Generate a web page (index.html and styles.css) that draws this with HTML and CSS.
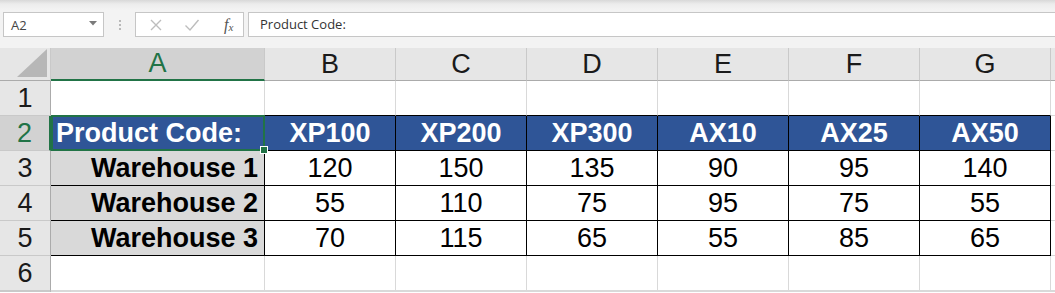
FILE: index.html
```html
<!DOCTYPE html>
<html lang="en">
<head>
<meta charset="utf-8">
<title>Stock by warehouse</title>
<link rel="stylesheet" href="styles.css">
</head>
<body>
<div class="app">
  <div class="formula-bar">
    <div class="namebox">
      <span class="namebox-ref">A2</span>
      <svg class="namebox-caret" width="8" height="5" viewBox="0 0 8 5"><path d="M0 0H8L4 4.5Z" fill="#7a7a7a"/></svg>
    </div>
    <div class="grip"><i></i><i></i><i></i></div>
    <div class="fx-tools">
      <svg class="tool" width="14" height="14" viewBox="0 0 14 14"><path d="M2 2L12 12M12 2L2 12" stroke="#bdbdbd" stroke-width="1.4" fill="none"/></svg>
      <svg class="tool" width="16" height="14" viewBox="0 0 16 14"><path d="M1.5 7.5L6 12L14.5 2" stroke="#bdbdbd" stroke-width="1.4" fill="none"/></svg>
      <span class="fx"><i>f</i><sub>x</sub></span>
    </div>
    <div class="formula-input">Product Code:</div>
  </div>

  <div class="sheet">
    <!-- column headers -->
    <div class="corner"><svg width="30" height="28" viewBox="0 0 30 28"><path d="M30 0V28H0Z" fill="#b7b7b7"/></svg></div>
    <div class="colhead active">A</div>
    <div class="colhead">B</div>
    <div class="colhead">C</div>
    <div class="colhead">D</div>
    <div class="colhead">E</div>
    <div class="colhead">F</div>
    <div class="colhead">G</div>
    <div class="colhead rest"></div>

    <!-- row 1 -->
    <div class="rowhead">1</div>
    <div class="cell"></div>
    <div class="cell edge-b"></div>
    <div class="cell edge-b"></div>
    <div class="cell edge-b"></div>
    <div class="cell edge-b"></div>
    <div class="cell edge-b"></div>
    <div class="cell edge-b"></div>
    <div class="cell rest"></div>

    <!-- row 2: product codes -->
    <div class="rowhead active">2</div>
    <div class="cell boxed head label selected">Product Code:<span class="sel"><span class="handle"></span></span></div>
    <div class="cell boxed head">XP100</div>
    <div class="cell boxed head">XP200</div>
    <div class="cell boxed head">XP300</div>
    <div class="cell boxed head">AX10</div>
    <div class="cell boxed head">AX25</div>
    <div class="cell boxed head">AX50</div>
    <div class="cell rest"></div>

    <!-- row 3 -->
    <div class="rowhead">3</div>
    <div class="cell boxed name">Warehouse 1</div>
    <div class="cell boxed num">120</div>
    <div class="cell boxed num">150</div>
    <div class="cell boxed num">135</div>
    <div class="cell boxed num">90</div>
    <div class="cell boxed num">95</div>
    <div class="cell boxed num">140</div>
    <div class="cell rest"></div>

    <!-- row 4 -->
    <div class="rowhead">4</div>
    <div class="cell boxed name">Warehouse 2</div>
    <div class="cell boxed num">55</div>
    <div class="cell boxed num">110</div>
    <div class="cell boxed num">75</div>
    <div class="cell boxed num">95</div>
    <div class="cell boxed num">75</div>
    <div class="cell boxed num">55</div>
    <div class="cell rest"></div>

    <!-- row 5 -->
    <div class="rowhead">5</div>
    <div class="cell boxed name">Warehouse 3</div>
    <div class="cell boxed num">70</div>
    <div class="cell boxed num">115</div>
    <div class="cell boxed num">65</div>
    <div class="cell boxed num">55</div>
    <div class="cell boxed num">85</div>
    <div class="cell boxed num">65</div>
    <div class="cell rest"></div>

    <!-- row 6 -->
    <div class="rowhead">6</div>
    <div class="cell"></div>
    <div class="cell"></div>
    <div class="cell"></div>
    <div class="cell"></div>
    <div class="cell"></div>
    <div class="cell"></div>
    <div class="cell"></div>
    <div class="cell rest"></div>

    <!-- row 7 (scrolled mostly out of view) -->
    <div class="rowhead"></div>
    <div class="cell"></div>
    <div class="cell"></div>
    <div class="cell"></div>
    <div class="cell"></div>
    <div class="cell"></div>
    <div class="cell"></div>
    <div class="cell"></div>
    <div class="cell rest"></div>
  </div>
</div>
</body>
</html>
```

FILE: styles.css
```css
* {
  box-sizing: border-box;
}

html,
body {
  margin: 0;
  padding: 0;
  overflow: hidden;
  background: #ffffff;
}

body {
  font-family: "Liberation Sans", Arial, sans-serif;
  color: #000000;
}

.app {
  width: 1055px;
  height: 293px;
  overflow: hidden;
}

/* ---------- formula bar ---------- */

.formula-bar {
  height: 48px;
  display: flex;
  align-items: flex-start;
  padding: 12px 0 0 3px;
  background: linear-gradient(#d8d8d8 0px, #ececec 4px, #f3f3f3 10px, #f3f3f3 100%);
  font-family: "Open Sans", "Noto Sans", sans-serif;
  font-size: 13px;
  color: #444444;
}

.namebox {
  width: 101px;
  height: 25px;
  background: #ffffff;
  border: 1px solid #c6c6c6;
  display: flex;
  align-items: center;
  justify-content: space-between;
  padding: 0 6px 0 7px;
}

.namebox-caret {
  margin-top: -2px;
}

.grip {
  width: 31px;
  height: 25px;
  display: flex;
  flex-direction: column;
  align-items: center;
  justify-content: center;
  gap: 2px;
}

.grip i {
  width: 2px;
  height: 2px;
  background: #b9b9b9;
}

.fx-tools {
  width: 109px;
  height: 25px;
  background: #ffffff;
  border: 1px solid #c6c6c6;
  display: flex;
  align-items: center;
  padding: 0 0 0 13px;
  gap: 21px;
}

.fx {
  font-family: "Liberation Serif", serif;
  font-size: 16px;
  color: #555555;
  margin-left: 3px;
  line-height: 1;
}

.fx sub {
  font-style: italic;
  font-size: 11px;
  vertical-align: -1px;
}

.formula-input {
  flex: 1;
  margin-left: 4px;
  height: 25px;
  background: #ffffff;
  border: 1px solid #c6c6c6;
  border-right: none;
  padding-left: 11px;
  line-height: 23px;
  color: #333333;
}

/* ---------- sheet grid ---------- */

.sheet {
  display: grid;
  grid-template-columns: 51px 214px repeat(6, 131px) 1fr;
  grid-template-rows: 33px repeat(6, 35px) 1fr;
  font-size: 27px;
}

.corner {
  background: #e6e6e6;
  border-right: 1px solid #c9c9c9;
  border-bottom: 1px solid #ababab;
  display: flex;
  align-items: flex-end;
  justify-content: flex-end;
  padding: 0 3px 3px 0;
}

.corner svg {
  display: block;
}

.colhead {
  background: #e6e6e6;
  border-right: 1px solid #c9c9c9;
  border-bottom: 1px solid #ababab;
  text-align: center;
  line-height: 33px;
  color: #1a1a1a;
}

.colhead.active {
  background: #d2d2d2;
  color: #217346;
  border-bottom: 2px solid #217346;
  line-height: 31px;
}

.colhead.rest {
  border-right: none;
}

.rowhead {
  background: #e6e6e6;
  border-right: 1px solid #ababab;
  border-bottom: 1px solid #c9c9c9;
  text-align: center;
  line-height: 34px;
  color: #1a1a1a;
}

.rowhead.active {
  background: #d2d2d2;
  color: #217346;
  border-right: 2px solid #217346;
}

.cell {
  border-right: 1px solid #d9d9d9;
  border-bottom: 1px solid #d9d9d9;
  line-height: 34px;
  white-space: nowrap;
}

.cell.rest {
  border-right: none;
}

/* bordered data block A2:G5 */
.cell.edge-b {
  border-bottom-color: #000000;
}

.cell.boxed {
  border-right-color: #000000;
  border-bottom-color: #000000;
}

.cell.head {
  background: #2f5597;
  color: #ffffff;
  font-weight: bold;
  text-align: center;
}

.cell.label {
  text-align: left;
  padding-left: 5px;
}

.cell.name {
  background: #d9d9d9;
  font-weight: bold;
  text-align: right;
  padding-right: 6px;
}

.cell.num {
  text-align: center;
}

/* active cell outline with fill handle */
.cell.selected {
  position: relative;
  z-index: 2;
}

.sel {
  position: absolute;
  left: 0;
  top: -1px;
  right: -1px;
  bottom: -1px;
  border: 2px solid #217346;
  pointer-events: none;
}

.handle {
  position: absolute;
  right: -5px;
  bottom: -5px;
  width: 8px;
  height: 8px;
  background: #217346;
  border: 1px solid #ffffff;
}
```
